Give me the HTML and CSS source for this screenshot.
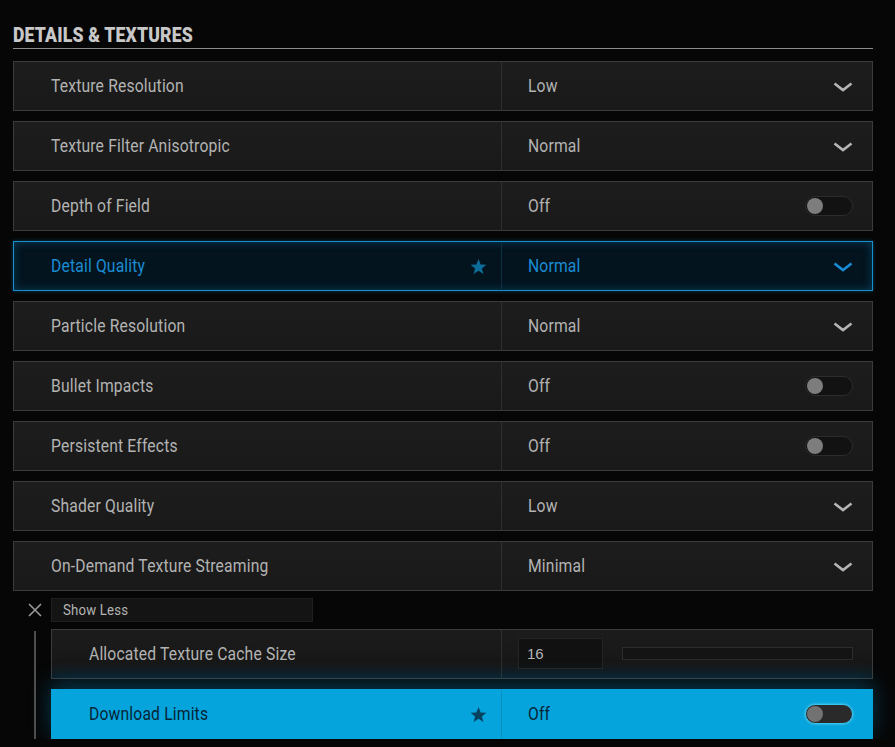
FILE: index.html
```html
<!DOCTYPE html>
<html lang="en">
<head>
<meta charset="utf-8">
<title>Details &amp; Textures</title>
<link rel="stylesheet" href="styles.css">
</head>
<body>
<svg width="0" height="0" class="defs" aria-hidden="true">
  <defs>
    <symbol id="chev" viewBox="0 0 20 10"><path d="M1.5 1.5 L10 8 L18.5 1.5" fill="none" stroke="currentColor" stroke-width="2.6"/></symbol>
    <symbol id="star" viewBox="0 0 24 24"><path d="M12 1.5 l3 7.6 8.1.5-6.3 5.1 2.1 7.9L12 18.1 5.1 22.6l2.1-7.9L.9 9.6l8.1-.5z" fill="currentColor"/></symbol>
  </defs>
</svg>
<section class="panel">
  <h2 class="panel-title"><span class="t">DETAILS &amp; TEXTURES</span></h2>
  <div class="rows">
    <div class="row"><div class="label"><span class="t">Texture Resolution</span></div><div class="value"><span class="t">Low</span><svg class="chev"><use href="#chev"/></svg></div></div>
    <div class="row"><div class="label"><span class="t">Texture Filter Anisotropic</span></div><div class="value"><span class="t">Normal</span><svg class="chev"><use href="#chev"/></svg></div></div>
    <div class="row"><div class="label"><span class="t">Depth of Field</span></div><div class="value"><span class="t">Off</span><span class="toggle"></span></div></div>
    <div class="row row-focus"><div class="label"><span class="t">Detail Quality</span><svg class="star"><use href="#star"/></svg></div><div class="value"><span class="t">Normal</span><svg class="chev"><use href="#chev"/></svg></div></div>
    <div class="row"><div class="label"><span class="t">Particle Resolution</span></div><div class="value"><span class="t">Normal</span><svg class="chev"><use href="#chev"/></svg></div></div>
    <div class="row"><div class="label"><span class="t">Bullet Impacts</span></div><div class="value"><span class="t">Off</span><span class="toggle"></span></div></div>
    <div class="row"><div class="label"><span class="t">Persistent Effects</span></div><div class="value"><span class="t">Off</span><span class="toggle"></span></div></div>
    <div class="row"><div class="label"><span class="t">Shader Quality</span></div><div class="value"><span class="t">Low</span><svg class="chev"><use href="#chev"/></svg></div></div>
    <div class="row"><div class="label"><span class="t">On-Demand Texture Streaming</span></div><div class="value"><span class="t">Minimal</span><svg class="chev"><use href="#chev"/></svg></div></div>
  </div>
  <div class="less">
    <svg class="close" viewBox="0 0 14 14"><path d="M1 1 L13 13 M13 1 L1 13" stroke="currentColor" stroke-width="1.6"/></svg>
    <div class="less-btn"><span class="t">Show Less</span></div>
  </div>
  <div class="sub">
    <div class="sub-rows">
      <div class="row row-sub"><div class="label"><span class="t">Allocated Texture Cache Size</span></div><div class="value"><span class="num">16</span><span class="track"></span></div></div>
      <div class="row row-sub row-hot"><div class="label"><span class="t">Download Limits</span><svg class="star"><use href="#star"/></svg></div><div class="value"><span class="t">Off</span><span class="toggle"></span></div></div>
    </div>
  </div>
</section>
</body>
</html>
```
FILE: styles.css
```css
html, body {
  margin: 0;
  background: #060606;
}
body {
  font-family: Roboto, "Liberation Sans", sans-serif;
  color: #b3b3b3;
  overflow: hidden;
}
.defs { position: absolute; }

/* narrow face: the UI font is a condensed grotesque */
.t {
  display: inline-block;
  transform: scaleX(0.825);
  transform-origin: 0 50%;
  white-space: nowrap;
  letter-spacing: 0.2px;
}

.panel {
  width: 860px;
  padding: 24px 0 0 13px;
}
.panel-title {
  margin: 0 0 12px;
  font-size: 20px;
  font-weight: 900;
  color: #c8c8c8;
  line-height: 22px;
  padding-bottom: 2px;
  border-bottom: 1px solid #8d8d8d;
}
.panel-title .t { transform: scaleX(0.88); }

.rows {
  display: flex;
  flex-direction: column;
  gap: 10px;
}
.row {
  height: 50px;
  box-sizing: border-box;
  display: grid;
  grid-template-columns: 488px 1fr;
  background: linear-gradient(180deg, #1d1d1d, #191919);
  border: 1px solid #3b3b3b;
  font-size: 19px;
  line-height: 22px;
}
.label {
  display: flex;
  align-items: center;
  justify-content: space-between;
  padding: 0 14px 1px 37px;
  border-right: 1px solid #2e2e2e;
}
.value {
  display: flex;
  align-items: center;
  justify-content: space-between;
  padding: 0 19px 1px 26px;
}
.chev {
  width: 20px;
  height: 10px;
  color: #b5b5b5;
  margin-top: 2px;
}
.star {
  width: 17px;
  height: 17px;
  color: #0d6d9a;
  margin-top: 2px;
}
.toggle {
  position: relative;
  width: 48px;
  height: 20px;
  box-sizing: border-box;
  border-radius: 11px;
  background: #121212;
  border: 1px solid #2c2c2c;
}
.toggle::before {
  content: "";
  position: absolute;
  left: 1px;
  top: 1px;
  width: 16px;
  height: 16px;
  border-radius: 50%;
  background: #7d7d7d;
}

.row-focus {
  background: #03141f;
  border-color: #1690cc;
  box-shadow: inset 0 0 8px rgba(20, 140, 200, 0.35), 0 0 4px rgba(20, 140, 200, 0.4);
  color: #1a8cd4;
}
.row-focus .label { border-right-color: #0c3042; }
.row-focus .chev { color: #1a8cd4; }

.less {
  display: flex;
  align-items: center;
  height: 24px;
  margin-top: 7px;
}
.close {
  width: 14px;
  height: 14px;
  color: #9a9a9a;
  margin: 0 9px 0 15px;
}
.less-btn {
  width: 262px;
  height: 24px;
  box-sizing: border-box;
  background: #141414;
  border: 1px solid #1f1f1f;
  font-size: 15px;
  color: #b5b5b5;
  line-height: 22px;
  padding-left: 11px;
}
.less-btn .t { transform: scaleX(0.88); }

.sub {
  margin-top: 7px;
  padding-left: 22px;
  position: relative;
}
.sub::before {
  content: "";
  position: absolute;
  left: 21px;
  top: 2px;
  bottom: 0;
  width: 2px;
  background: #4e4e4e;
}
.sub-rows {
  margin-left: 16px;
  display: flex;
  flex-direction: column;
  gap: 10px;
}
.row-sub { grid-template-columns: 450px 1fr; }
.row-sub:first-child {
  background: linear-gradient(180deg, #1c1c1c 0%, #171717 70%, #0c1a22 100%);
}
.num {
  width: 85px;
  height: 31px;
  box-sizing: border-box;
  background: #111;
  border: 1px solid #242424;
  font-family: "Liberation Sans", sans-serif;
  font-size: 15px;
  color: #b5b5b5;
  line-height: 29px;
  padding-left: 8px;
  margin-left: -10px;
}
.track {
  flex: 1;
  margin-left: 19px;
  height: 13px;
  box-sizing: border-box;
  background: #141414;
  border: 1px solid #2d2d2d;
}
.row-hot {
  background: #05a4dc;
  border-color: #05a4dc;
  color: #062536;
  box-shadow: 0 -6px 22px rgba(10, 150, 210, 0.35);
}
.row-hot .label { border-right-color: #0b8fc0; }
.row-hot .star { color: #06425f; }
.row-hot .toggle {
  background: #2a2a2a;
  border: 1px solid #38c4f0;
  box-shadow: 0 0 3px rgba(150, 230, 255, 0.6);
}
.row-hot .toggle::before { background: #727272; }
```
